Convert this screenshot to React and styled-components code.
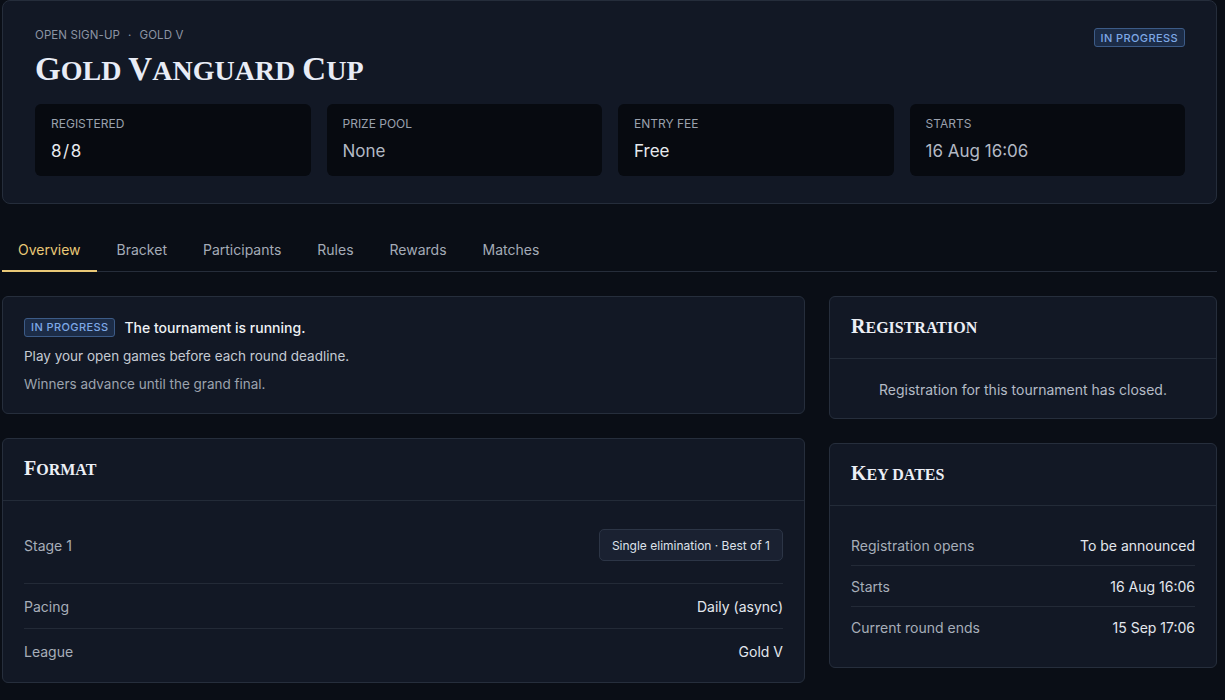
import React from "react";
import styled, { createGlobalStyle } from "styled-components";

const GlobalStyle = createGlobalStyle`
  html, body {
    margin: 0;
    padding: 0;
    background: #0a0e16;
    color: #e4e8ef;
    font-family: Inter, "Noto Sans", sans-serif;
  }
  * { box-sizing: border-box; }
`;

const Page = styled.div`
  padding: 0 8px 24px 2px;
  min-height: 700px;
`;

const Hero = styled.header`
  background: #121825;
  border: 1px solid #252d3b;
  border-radius: 8px;
  padding: 25px 31px 27px 32px;
`;

const HeroTop = styled.div`
  display: flex;
  justify-content: space-between;
  align-items: flex-start;
`;

const Eyebrow = styled.div`
  font-size: 11.5px;
  color: #8c94a3;
  text-transform: uppercase;
  letter-spacing: 0.1px;
  line-height: 18px;

  span {
    margin: 0 8px;
  }
`;

// serif title, caps with the initials a bit taller (Cinzel look)
const Display = styled.h1`
  margin: 5px 0 0;
  font-family: "Liberation Serif", "DejaVu Serif", serif;
  font-weight: 700;
  font-size: 28px;
  line-height: 40px;
  text-transform: uppercase;
  color: #e8ecf6;

  b {
    font-size: 33px;
    font-weight: 700;
  }
`;

const CardTitle = styled.h2`
  margin: 0;
  font-family: "Liberation Serif", "DejaVu Serif", serif;
  font-weight: 700;
  font-size: 16px;
  line-height: 21px;
  text-transform: uppercase;
  color: #eceff6;

  b {
    font-size: 20px;
    font-weight: 700;
  }
`;

const Badge = styled.span`
  display: inline-flex;
  align-items: center;
  height: 19px;
  padding: 0 6px;
  font-size: 11px;
  font-weight: 500;
  letter-spacing: 0.4px;
  text-transform: uppercase;
  color: #7ea8e6;
  background: #1c2c47;
  border: 1px solid #3c5b87;
  border-radius: 3px;
  margin-top: ${(p) => (p.$top ? "2px" : "0")};
  flex-shrink: 0;
`;

const Stats = styled.div`
  display: grid;
  grid-template-columns: repeat(4, 1fr);
  gap: 16px;
  margin-top: 13px;
`;

const Stat = styled.div`
  background: #070a10;
  border-radius: 6px;
  padding: 12px 16px 13px;
  height: 72px;
`;

const StatLabel = styled.div`
  font-size: 12px;
  color: #9aa1ad;
  text-transform: uppercase;
  line-height: 16px;
`;

const StatValue = styled.div`
  margin-top: 7px;
  font-size: 17px;
  line-height: 24px;
  color: ${(p) => (p.$dim ? "#b3b9c4" : "#e6e9ee")};
  letter-spacing: ${(p) => (p.$spaced ? "1.5px" : "0")};
`;

const Tabs = styled.nav`
  display: flex;
  gap: 4px;
  margin-top: 24px;
  border-bottom: 1px solid #262d3a;
`;

const Tab = styled.div`
  padding: 12px 16px 10px;
  font-size: 14px;
  line-height: 20px;
  color: ${(p) => (p.$active ? "#e9c877" : "#a4abb7")};
  border-bottom: 2px solid ${(p) => (p.$active ? "#e9c877" : "transparent")};
  margin-bottom: -1px;
`;

const Content = styled.div`
  display: grid;
  grid-template-columns: 803px 1fr;
  gap: 24px;
  margin-top: 24px;
  align-items: start;
`;

const Column = styled.div`
  display: flex;
  flex-direction: column;
  gap: 24px;
`;

const Card = styled.section`
  background: #121825;
  border: 1px solid #262e3c;
  border-radius: 6px;
`;

const StatusBody = styled.div`
  padding: 19px 21px 19px;
`;

const StatusHead = styled.div`
  display: flex;
  align-items: center;
  gap: 9px;
  height: 22px;
  font-size: 14px;
  font-weight: 500;
  color: #eef1f5;
`;

const Note = styled.p`
  margin: 8px 0 0;
  font-size: 13.5px;
  line-height: 20px;
  color: ${(p) => (p.$muted ? "#9ca3ae" : "#c4cad3")};
`;

const CardHead = styled.div`
  padding: 19px 21px 20px;
  border-bottom: 1px solid #232b38;
`;

const CenterText = styled.div`
  padding: 20px 21px 18px;
  text-align: center;
  font-size: 14px;
  line-height: 21px;
  color: #b4bbc6;
`;

const List = styled.div`
  padding: ${(p) => (p.$loose ? "19px 21px 20px" : "6px 21px 9px")};
`;

const Row = styled.div`
  display: flex;
  justify-content: space-between;
  align-items: center;
  padding: ${(p) => (p.$tall ? "22px 0" : p.$tight ? "10px 0 9px" : "12px 0 11px")};
  font-size: 14px;
  line-height: 21px;

  & + & {
    border-top: 1px solid #232a37;
  }
`;

const Key = styled.span`
  color: #a7aeb9;
`;

const Value = styled.span`
  color: #e3e7ed;
`;

const Pill = styled.span`
  display: inline-flex;
  align-items: center;
  height: 32px;
  padding: 0 12px;
  font-size: 12px;
  color: #dde2ea;
  background: #1a2131;
  border: 1px solid #2c3546;
  border-radius: 5px;
`;

// first letter of each word a size up, rest as small caps
const Caps = ({ text }) =>
  text.split(" ").map((w, i) => (
    <React.Fragment key={i}>
      {i > 0 && " "}
      {i === 0 || /[A-Z]/.test(w[0]) ? <b>{w[0]}</b> : w[0]}
      {w.slice(1)}
    </React.Fragment>
  ));

const stats = [
  { label: "Registered", value: "8/8", spaced: true },
  { label: "Prize pool", value: "None", dim: true },
  { label: "Entry fee", value: "Free" },
  { label: "Starts", value: "16 Aug 16:06", dim: true },
];

const tabs = ["Overview", "Bracket", "Participants", "Rules", "Rewards", "Matches"];

const formatRows = [
  { key: "Pacing", value: "Daily (async)" },
  { key: "League", value: "Gold V" },
];

const dates = [
  { key: "Registration opens", value: "To be announced" },
  { key: "Starts", value: "16 Aug 16:06" },
  { key: "Current round ends", value: "15 Sep 17:06" },
];

export default function App() {
  return (
    <Page>
      <GlobalStyle />
      <Hero>
        <HeroTop>
          <div>
            <Eyebrow>
              Open sign-up<span>·</span>Gold V
            </Eyebrow>
            <Display><Caps text="Gold Vanguard Cup" /></Display>
          </div>
          <Badge $top>In progress</Badge>
        </HeroTop>
        <Stats>
          {stats.map((s) => (
            <Stat key={s.label}>
              <StatLabel>{s.label}</StatLabel>
              <StatValue $dim={s.dim} $spaced={s.spaced}>{s.value}</StatValue>
            </Stat>
          ))}
        </Stats>
      </Hero>

      <Tabs>
        {tabs.map((t, i) => (
          <Tab key={t} $active={i === 0}>{t}</Tab>
        ))}
      </Tabs>

      <Content>
        <Column>
          <Card>
            <StatusBody>
              <StatusHead>
                <Badge>In progress</Badge>
                The tournament is running.
              </StatusHead>
              <Note>Play your open games before each round deadline.</Note>
              <Note $muted>Winners advance until the grand final.</Note>
            </StatusBody>
          </Card>
          <Card>
            <CardHead>
              <CardTitle><Caps text="Format" /></CardTitle>
            </CardHead>
            <List>
              <Row $tall>
                <Key>Stage 1</Key>
                <Pill>Single elimination · Best of 1</Pill>
              </Row>
              {formatRows.map((r) => (
                <Row key={r.key}>
                  <Key>{r.key}</Key>
                  <Value>{r.value}</Value>
                </Row>
              ))}
            </List>
          </Card>
        </Column>
        <Column>
          <Card>
            <CardHead>
              <CardTitle><Caps text="Registration" /></CardTitle>
            </CardHead>
            <CenterText>Registration for this tournament has closed.</CenterText>
          </Card>
          <Card>
            <CardHead>
              <CardTitle><Caps text="Key dates" /></CardTitle>
            </CardHead>
            <List $loose>
              {dates.map((r) => (
                <Row key={r.key} $tight>
                  <Key>{r.key}</Key>
                  <Value>{r.value}</Value>
                </Row>
              ))}
            </List>
          </Card>
        </Column>
      </Content>
    </Page>
  );
}
